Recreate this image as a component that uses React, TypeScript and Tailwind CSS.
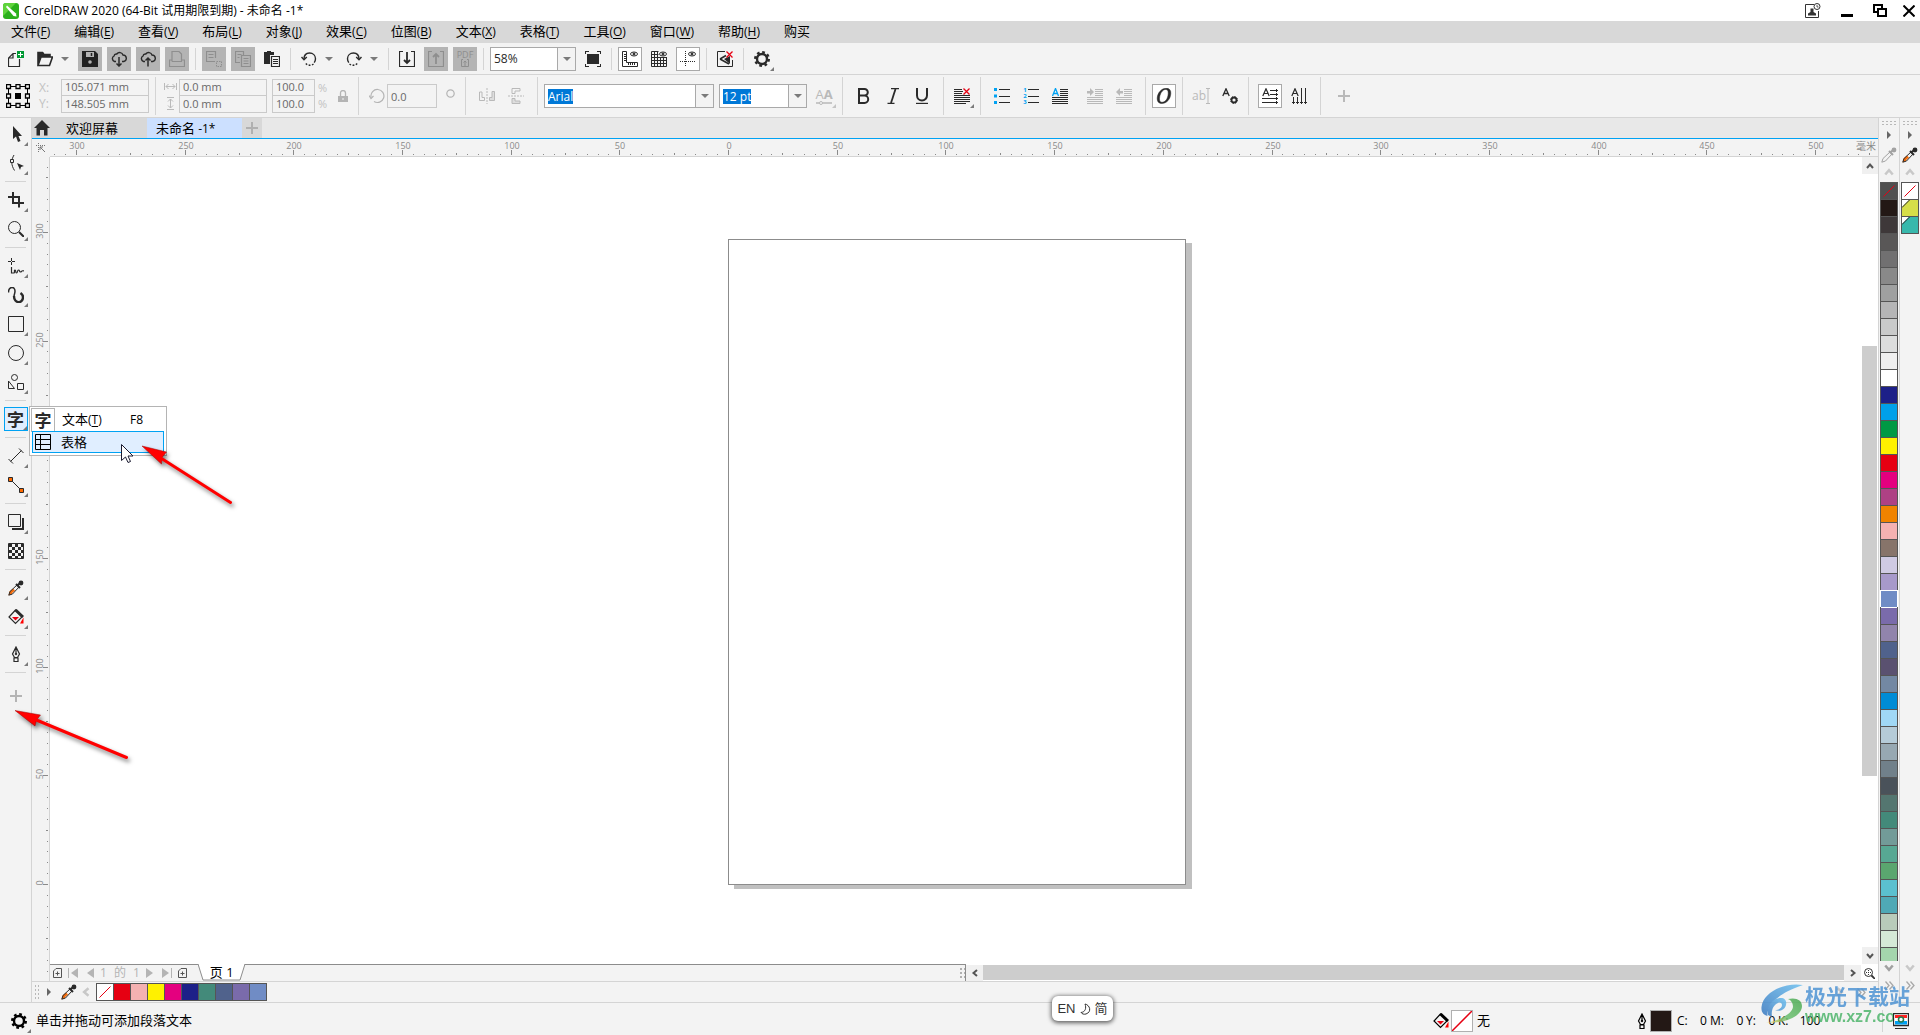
import { useState } from 'react';
import type { ReactNode } from 'react';
import clsx from 'clsx';

const menus = [
  { name: '文件', key: 'F' },
  { name: '编辑', key: 'E' },
  { name: '查看', key: 'V' },
  { name: '布局', key: 'L' },
  { name: '对象', key: 'J' },
  { name: '效果', key: 'C' },
  { name: '位图', key: 'B' },
  { name: '文本', key: 'X' },
  { name: '表格', key: 'T' },
  { name: '工具', key: 'O' },
  { name: '窗口', key: 'W' },
  { name: '帮助', key: 'H' },
  { name: '购买', key: '' },
];

const paletteColors = [
  '#231815', '#3e3839', '#595757', '#717071', '#898989', '#9fa0a0', '#b5b5b6', '#c9caca', '#dcdddd',
  '#efefef', '#ffffff', '#1d2088', '#00a0e9', '#009944', '#fff100', '#e60012', '#e4007f', '#ae4184',
  '#f08300', '#f4b1b1', '#87746a', '#cfcae3', '#a799ca', '#708cc5', '#7a6bab', '#9184ac', '#50628c',
  '#5a5170', '#7388a3', '#008cd6', '#a0d8f6', '#b5cbd8', '#97a8b2', '#71808a', '#4a525a', '#547670',
  '#438a7a', '#729b98', '#57a893', '#5aa66f', '#5bc0cf', '#4fa9b6', '#b8cbba', '#d5e9d7', '#a4d5ad',
];

const documentColors = [
  '#e60012', '#f4b1b1', '#fff100', '#e4007f', '#1d2088', '#438a7a', '#50628c', '#7a6bab', '#708cc5',
];

// screen pixels per millimetre at the current zoom
const MM = 2.174;
const ORIGIN_X = 678;
const ORIGIN_Y = 727;

interface IconProps {
  children: ReactNode;
  className?: string;
  box?: string;
}

function Icon({ children, className = 'size-4', box = '0 0 16 16' }: IconProps) {
  return (
    <svg viewBox={box} className={clsx('shrink-0', className)} fill="none" stroke="currentColor" aria-hidden="true">
      {children}
    </svg>
  );
}

interface ToolProps {
  label: string;
  children: ReactNode;
  look?: 'plain' | 'filled' | 'boxed';
  dim?: boolean;
  more?: boolean;
}

function Tool({ label, children, look = 'plain', dim, more }: ToolProps) {
  return (
    <button
      aria-label={label}
      className={clsx(
        'relative flex size-6 shrink-0 items-center justify-center',
        look === 'filled' && 'bg-[#b4b4b4]',
        look === 'boxed' && 'border border-[#a9a9a9] bg-white',
        dim && look === 'filled' && 'text-[#8e8e8e]',
        dim && look === 'plain' && 'text-[#b9b9b9]',
      )}
    >
      {children}
      {more && <Corner className={dim ? 'text-[#c4c4c4]' : 'text-[#7a7a7a]'} />}
    </button>
  );
}

function Corner({ className }: { className?: string }) {
  return (
    <svg viewBox="0 0 4 4" className={clsx('absolute right-0 bottom-0 size-1', className)} aria-hidden="true">
      <path d="M4 0v4H0z" fill="currentColor" />
    </svg>
  );
}

function Caret({ label }: { label: string }) {
  return (
    <button aria-label={label} className="flex h-6 w-4 items-center justify-center text-[#7a7a7a]">
      <Icon className="h-1 w-2" box="0 0 8 4">
        <path d="M0 0h8L4 4z" fill="currentColor" stroke="none" />
      </Icon>
    </button>
  );
}

function Divider({ tall }: { tall?: boolean }) {
  return <div className={clsx('mx-px w-px shrink-0 bg-[#d4d4d4]', tall ? 'h-[38px]' : 'h-[22px]')} />;
}

function Group({ children }: { children: ReactNode }) {
  return <div className="flex items-center gap-[5px] px-[3px]">{children}</div>;
}

interface ComboProps {
  label: string;
  value: string;
  width: string;
  selected?: boolean;
}

function Combo({ label, value, width, selected }: ComboProps) {
  return (
    <div className={clsx('flex h-6 shrink-0 border border-[#a9a9a9] bg-white', width)}>
      <div className="flex min-w-0 flex-1 items-center pl-[3px]">
        <input
          aria-label={label}
          defaultValue={value}
          className={clsx(
            'field-sizing-content h-[15px] text-[12px] leading-[15px] outline-none',
            selected && 'bg-[#0078d7] text-white',
          )}
        />
      </div>
      <div className="flex w-[18px] items-center justify-center border-l border-[#a9a9a9] bg-[#f3f3f3]">
        <Caret label={`${label} list`} />
      </div>
    </div>
  );
}

function GearIcon({ className = 'size-4' }: { className?: string }) {
  return (
    <Icon className={className}>
      <circle cx="8" cy="8" r="5" strokeWidth="2.4" />
      <circle cx="8" cy="8" r="6.8" strokeWidth="2.4" strokeDasharray="2.67 2.67" />
    </Icon>
  );
}

function DropperIcon({ faded }: { faded?: boolean }) {
  return (
    <Icon className={clsx('size-4', faded && 'opacity-40')}>
      <path d="M2 11.500 1 15l3.500-1" fill={faded ? 'none' : '#f26a0a'} stroke="none" />
      <path d="M1.500 11.500 5 8.500l2 2-4 3.500-2.500 1.500z" fill={faded ? 'none' : '#f26a0a'} stroke="none" />
      <path d="M9 5 2 11.500.8 15.200l3.700-1.200L11 7" />
      <path d="M8 4l4 4M10 5l3-3" strokeWidth="2" />
      <circle cx="13" cy="3" r="2.400" fill="currentColor" stroke="none" />
    </Icon>
  );
}

function BucketIcon() {
  return (
    <Icon>
      <path d="M7.500 1 1 8l6.500 6.500L14 8z" strokeWidth="1.200" />
      <path d="M7.500 1 15 8" strokeWidth="3" />
      <path d="M4 8h7l-3.500 3.500z" fill="#e60012" stroke="none" />
      <path d="M15.500 8.500v6h-3.500z" fill="#f00" stroke="none" />
    </Icon>
  );
}

function PenIcon() {
  return (
    <Icon>
      <path d="M8 1 4.500 8l2 3.500h3l2-3.500zM8 1v7M6 12h4v3.500H6z" strokeWidth="1.200" />
      <circle cx="8" cy="8" r="0.800" fill="currentColor" />
    </Icon>
  );
}

function PlusIcon({ className = 'size-3' }: { className?: string }) {
  return (
    <Icon className={className} box="0 0 12 12">
      <path d="M6 0v12M0 6h12" strokeWidth="2" />
    </Icon>
  );
}

function Chevron({ turn = '', className = 'size-2 text-[#555]' }: { turn?: string; className?: string }) {
  return (
    <Icon className={clsx(className, turn)} box="0 0 8 8">
      <path d="M1 6l3-3.500L7 6" strokeWidth="2" />
    </Icon>
  );
}

function DoubleChevron() {
  return (
    <Icon className="size-[9px] text-[#a8a8a8]" box="0 0 9 9">
      <path d="M.5.5l3.500 4-3.500 4M4.500.5l3.500 4-3.500 4" strokeWidth="1.300" />
    </Icon>
  );
}

function RightArrow() {
  return (
    <Icon className="h-2 w-1 text-[#666]" box="0 0 4 8">
      <path d="M0 0v8l4-4z" fill="currentColor" stroke="none" />
    </Icon>
  );
}

function CloudIcon({ up }: { up?: boolean }) {
  return (
    <Icon>
      <path d="M5 10.500H3.500a3 3 0 0 1-.5-5.500 2.500 2.500 0 0 1 2.800-2 3.500 3.500 0 0 1 6.200 1 3.300 3.300 0 0 1 .8 6.500H11" strokeWidth="1.400" />
      {up ? <path d="M8 15.500V7M5.500 9.500 8 7l2.500 2.500" strokeWidth="1.500" /> : <path d="M8 6v9M5.500 12.500 8 15l2.500-2.500" strokeWidth="1.500" />}
    </Icon>
  );
}

function UndoIcon({ flip }: { flip?: boolean }) {
  return (
    <Icon className={clsx('size-4', flip && '-scale-x-100')}>
      <path d="M3 8C3 4 5.500 2 8.500 2c3.500 0 6 2.500 6 5.800 0 1.500-.5 2.800-1.300 3.800" strokeWidth="1.400" />
      <path d="M.5 6 3 8.700 5.800 6" strokeWidth="1.400" />
      <path d="M12.500 13c-2.500 2-6.500 1.500-8.500-1.500" strokeDasharray="1.800 1.500" strokeWidth="1.400" />
    </Icon>
  );
}

function TableIcon() {
  return (
    <Icon>
      <path d="M.5.5h15v15H.5zM5.500.5v15M.5 5.500h15M.5 10.500h15" />
    </Icon>
  );
}

function TextIcon() {
  return <span className="font-['Noto_Sans_CJK_SC',sans-serif] text-[17px] leading-5 font-bold text-[#2a2a2a]">字</span>;
}

function TitleBar() {
  return (
    <header className="flex h-[21px] shrink-0 items-center bg-white pr-[5px] pl-[3px]">
      <Icon className="size-4">
        <rect width="16" height="16" rx="3" fill="#2bb01c" stroke="none" />
        <path d="M0 3a3 3 0 0 1 3-3h10L0 13z" fill="#5fd33c" stroke="none" />
        <path d="M3 4l1-1.500L13 10.500l.5 3-3-.5z" fill="#fff" stroke="none" />
      </Icon>
      <h1 className="ml-[5px] flex-1 text-[12px] leading-5">CorelDRAW 2020 (64-Bit 试用期限到期) - 未命名 -1*</h1>
      <button aria-label="Account" className="mr-5 text-[#333]">
        <Icon className="h-[15px] w-4" box="0 0 16 15">
          <path d="M9 1.500H.5v13h13V8" />
          <path d="M3 12.500h8v-2L8.500 9V5.500h-3V9L3 10.500z" fill="currentColor" stroke="none" />
          <circle cx="12" cy="3.500" r="3" fill="#fff" />
          <path d="M12 2v2h1.500" strokeWidth="0.800" />
        </Icon>
      </button>
      <button aria-label="Minimize" className="mr-5">
        <Icon className="h-[14px] w-3" box="0 0 12 14">
          <path d="M0 11.500h12" strokeWidth="3" />
        </Icon>
      </button>
      <button aria-label="Restore" className="mr-4">
        <Icon className="h-[13px] w-[14px]" box="0 0 14 13">
          <path d="M4 8H1V1h8v3M5 5h8v7H5z" strokeWidth="2" shapeRendering="crispEdges" />
        </Icon>
      </button>
      <button aria-label="Close">
        <Icon className="size-3" box="0 0 12 12">
          <path d="M.5.5l11 11M11.500.5l-11 11" strokeWidth="2" />
        </Icon>
      </button>
    </header>
  );
}

function MenuBar() {
  return (
    <nav className="flex h-[22px] shrink-0 items-start gap-6 bg-[#d8d8d8] pl-[11px]">
      {menus.map((menu) => (
        <button key={menu.name} className="text-[13px] leading-5">
          {menu.name}
          {menu.key && (
            <span className="text-[12px]">
              (<span className="underline underline-offset-2">{menu.key}</span>)
            </span>
          )}
        </button>
      ))}
    </nav>
  );
}

function StandardBar() {
  return (
    <div className="flex h-8 shrink-0 items-center gap-[5px] border-b border-[#d4d4d4] pl-1 text-[#2a2a2a]">
      <Tool label="New">
        <Icon>
          <path d="M8 2.500H5L.5 7v8.500h11V8M.5 7H5V2.500" strokeWidth="1.200" />
          <path d="M9 0h7v7H9z" fill="#009933" stroke="none" />
          <path d="M12.500 1v5M10 3.500h5" stroke="#fff" />
        </Icon>
      </Tool>
      <div className="flex">
        <Tool label="Open">
          <Icon>
            <path d="M1 14.500V1.500h4.500l1.500 2h6V6M1 14.500 4 6h11.500l-3 8.500z" strokeWidth="1.600" />
            <path d="M1 1h5l1 2.500h6V6H4l-3 7z" fill="currentColor" stroke="none" />
          </Icon>
        </Tool>
        <Caret label="Recent files" />
      </div>
      <Tool label="Save" look="filled">
        <Icon>
          <path d="M0 0h13l3 3v13H0z" fill="#222" stroke="none" />
          <path d="M4 1h8v5H4z" fill="#b4b4b4" stroke="none" />
          <path d="M9.500 2v3" stroke="#222" strokeWidth="1.500" />
          <circle cx="8" cy="11" r="1.800" fill="#b4b4b4" stroke="none" />
        </Icon>
      </Tool>
      <Tool label="Open from cloud" look="filled"><CloudIcon /></Tool>
      <Tool label="Save to cloud" look="filled"><CloudIcon up /></Tool>
      <Tool label="Print" look="filled" dim>
        <Icon>
          <path d="M3 10.500V.5h7l2.500 2.500v7.500M3 9H.5v6.500h15V9h-3M3 10.500h10" strokeWidth="1.200" />
        </Icon>
      </Tool>
      <Divider />
      <Tool label="Cut" look="filled" dim>
        <Icon>
          <path d="M9 10.500H.5V.5h9V7M2.500 3.500h5M2.500 6.500h5" strokeWidth="1.200" />
          <path d="M10.500 10.500h5v5h-5z" strokeDasharray="1.500 1" />
        </Icon>
      </Tool>
      <Tool label="Copy" look="filled" dim>
        <Icon>
          <path d="M5 11.500H.5V.5h8V4M2.500 3.500h4M2.500 6.500h2" strokeWidth="1.200" />
          <path d="M6.500 4.500h9v11h-9zM8.500 7.500h5M8.500 10h5M8.500 12.500h5" strokeWidth="1.200" />
        </Icon>
      </Tool>
      <Tool label="Paste">
        <Icon>
          <path d="M0 1h3V0h4v1h3v3H6v9H0z" fill="currentColor" stroke="none" />
          <path d="M7.500 5.500h8v10h-8zM9 8.500h5M9 10.500h5M9 12.500h5" strokeWidth="1.200" />
        </Icon>
      </Tool>
      <Divider />
      <div className="flex">
        <Tool label="Undo"><UndoIcon /></Tool>
        <Caret label="Undo history" />
      </div>
      <div className="flex">
        <Tool label="Redo"><UndoIcon flip /></Tool>
        <Caret label="Redo history" />
      </div>
      <Divider />
      <Tool label="Import">
        <Icon>
          <path d="M4 .5H.5v15h15V.5H12" strokeWidth="1.200" />
          <path d="M8 1v11M5 9l3 3 3-3" strokeWidth="1.800" />
        </Icon>
      </Tool>
      <Tool label="Export" look="filled" dim>
        <Icon>
          <path d="M4 .5H.5v15h15V.5H12" strokeWidth="1.200" />
          <path d="M8 13V3M5 6l3-3 3 3" strokeWidth="1.800" />
        </Icon>
      </Tool>
      <Tool label="Publish to PDF" look="filled" dim>
        <span className="flex flex-col items-center">
          <span className="text-[9px] leading-[9px]">PDF</span>
          <Icon className="size-2" box="0 0 8 8">
            <path d="M2 .5H.5v7h7v-7H6M4 7V2M2.500 3.500 4 2l1.500 1.500" />
          </Icon>
        </span>
      </Tool>
      <Divider />
      <Combo label="Zoom level" value="58%" width="w-[86px]" />
      <Tool label="Full-screen preview">
        <Icon>
          <path d="M2 3h12v10H2z" fill="currentColor" stroke="none" />
          <path d="M0 .5h4M12 .5h4M.5 0v3M15.500 0v3M.5 13v3M15.500 13v3M0 15.500h4M12 15.500h4" />
        </Icon>
      </Tool>
      <Divider />
      <Tool label="Show rulers" look="boxed">
        <Icon>
          <path d="M.5.5h4v11h11v4H.5z" />
          <path d="M2 3.500h2M2 5.500h2M2 7.500h2M2 9.500h2M6.500 12v2M8.500 12v2M10.500 12v2M12.500 12v2" />
          <ellipse cx="12" cy="3" rx="3.500" ry="2" />
          <circle cx="12" cy="3" r="1" fill="currentColor" />
        </Icon>
      </Tool>
      <Tool label="Show grid">
        <Icon>
          <path d="M.5.5h7M.5.5v15h15V6M.5 3.500h7M.5 6.500h15M.5 9.500h15M.5 12.500h15M3.500.5v15M6.500.5v15M9.500 6v9.500M12.500 6v9.500" />
          <ellipse cx="12" cy="3" rx="3.500" ry="2" />
          <circle cx="12" cy="3" r="1" fill="currentColor" />
        </Icon>
      </Tool>
      <Tool label="Show guidelines" look="boxed">
        <Icon>
          <path d="M5.500 0v16M0 10.500h16" strokeDasharray="1 1" />
          <ellipse cx="12" cy="3" rx="3.500" ry="2" />
          <circle cx="12" cy="3" r="1" fill="currentColor" />
        </Icon>
      </Tool>
      <Divider />
      <Tool label="Snap off">
        <Icon>
          <path d="M8 .5H.5v15h15V9" />
          <path d="M3 8l6-3.500M3 8l9 5" strokeWidth="1.500" />
          <path d="M7 8l6-3v8z" fill="currentColor" stroke="none" />
          <path d="M9.500.5l6 6M15.500.5l-6 6" stroke="#e60012" strokeWidth="1.300" />
        </Icon>
      </Tool>
      <Divider />
      <Tool label="Options" more><GearIcon /></Tool>
    </div>
  );
}

function PairFields({ names, values, width }: { names: string[]; values: string[]; width: string }) {
  return (
    <div className={clsx('flex flex-col border border-[#cacaca]', width)}>
      {values.map((value, index) => (
        <input
          key={names[index]}
          id={names[index]}
          aria-label={names[index]}
          defaultValue={value}
          className={clsx(
            'w-full bg-transparent pl-[3px] text-[11px] text-[#686868] outline-none',
            index === 0 ? 'h-4 border-b border-[#cacaca]' : 'h-4',
          )}
        />
      ))}
    </div>
  );
}

function PropertyBar() {
  return (
    <div className="flex h-[43px] shrink-0 items-center gap-[5px] border-b border-[#d4d4d4] pl-1.5 text-[#2a2a2a]">
      <button aria-label="Object origin" className="text-black">
        <Icon className="size-6" box="0 0 24 24">
          <path
            d="M.5.5h4v4h-4zM10 .5h4v4h-4zM19.500.5h4v4h-4zM.5 10h4v4h-4zM19.500 10h4v4h-4zM.5 19.500h4v4h-4zM10 19.500h4v4h-4zM19.500 19.500h4v4h-4z"
            strokeWidth="1.300"
          />
          <path d="M4.500 2.500H10M14 2.500h5.500M4.500 21.500H10M14 21.500h5.500M2.500 4.500V10M2.500 14v5.500M21.500 4.500V10M21.500 14v5.500" />
          <path d="M9 9h6v6H9z" fill="currentColor" stroke="none" />
        </Icon>
      </button>
      <div className="flex">
        <div className="flex w-[26px] flex-col pt-px pl-1 text-[12px] leading-4 text-[#c2c2c2]">
          <label htmlFor="X">X:</label>
          <label htmlFor="Y">Y:</label>
        </div>
        <PairFields names={['X', 'Y']} values={['105.071 mm', '148.505 mm']} width="w-[88px]" />
      </div>
      <Divider tall />
      <div className="flex">
        <div className="flex w-[17px] flex-col items-center justify-around text-[#bababa]">
          <Icon className="h-[7px] w-[13px]" box="0 0 13 7">
            <path d="M.5 0v7M12.500 0v7M2 3.500h9M4.500 1 2 3.500 4.500 6M8.500 1 11 3.500 8.500 6" />
          </Icon>
          <Icon className="h-[13px] w-[7px]" box="0 0 7 13">
            <path d="M0 .5h7M0 12.500h7M3.500 2v9M1 4.500 3.500 2 6 4.500M1 8.500 3.500 11 6 8.500" />
          </Icon>
        </div>
        <PairFields names={['Width', 'Height']} values={['0.0 mm', '0.0 mm']} width="w-[88px]" />
      </div>
      <div className="flex">
        <PairFields names={['Scale X', 'Scale Y']} values={['100.0', '100.0']} width="w-[43px]" />
        <div className="flex w-[14px] flex-col pt-px pl-[3px] text-[11px] leading-4 text-[#c2c2c2]">
          <span>%</span>
          <span>%</span>
        </div>
      </div>
      <button aria-label="Lock ratio" className="flex w-[18px] justify-center text-[#b4b4b4]">
        <Icon className="h-3 w-[10px]" box="0 0 10 12">
          <path d="M2.500 6V3a2.500 2.500 0 0 1 5 0v3" strokeWidth="1.300" />
          <path d="M0 6h10v6H0z" fill="currentColor" stroke="none" />
          <path d="M5 8v2" stroke="#f3f3f3" />
        </Icon>
      </button>
      <Divider tall />
      <div className="flex items-center">
        <label htmlFor="rotation" aria-label="Rotation" className="w-[22px] pl-1 text-[#b4b4b4]">
          <Icon>
            <path d="M2 9a6.500 6.500 0 1 1 3 4.500" strokeWidth="1.200" />
            <path d="M0 7.500l2 3 2.500-2.500" strokeWidth="1.200" />
          </Icon>
        </label>
        <input
          id="rotation"
          defaultValue="0.0"
          className="h-6 w-[50px] border border-[#cacaca] bg-transparent pl-[3px] text-[11px] text-[#686868] outline-none"
        />
      </div>
      <div className="flex w-[17px] justify-center pb-1.5 text-[#b4b4b4]">
        <Icon className="size-[9px]" box="0 0 9 9"><circle cx="4.500" cy="4.500" r="3.700" strokeWidth="1.200" /></Icon>
      </div>
      <Divider tall />
      <Group>
        <Tool label="Mirror horizontally" dim>
          <Icon>
            <path d="M.5 4v8.500h5V9.500H3V4z" />
            <path d="M8 0v16" strokeDasharray="2 1" />
            <path d="M13 3.500h2.500v9h-5v-3H13z" fill="#ddd" />
          </Icon>
        </Tool>
        <Tool label="Mirror vertically" dim>
          <Icon>
            <path d="M12 .5H4v5h3V3h5z" />
            <path d="M0 8h16" strokeDasharray="2 1" />
            <path d="M4 10.500h3V13h5v2.500H4z" fill="#ddd" />
          </Icon>
        </Tool>
      </Group>
      <Divider tall />
      <Combo label="Font" value="Arial" width="w-[170px]" selected />
      <Combo label="Font size" value="12 pt" width="w-[88px]" selected />
      <Tool label="Variable fonts" dim more>
        <span className="flex flex-col items-center">
          <span className="text-[13px] leading-[13px]">A<b>A</b></span>
          <Icon className="h-1 w-4" box="0 0 16 4">
            <path d="M0 2h16" strokeWidth="1.500" />
            <circle cx="5" cy="2" r="1.500" fill="#f3f3f3" />
          </Icon>
        </span>
      </Tool>
      <Divider tall />
      <Group>
        <Tool label="Bold">
          <Icon>
            <path d="M3 1v14M2 1h6.500a3.300 3.300 0 0 1 0 6.600H3M8.500 7.600a3.600 3.600 0 0 1 0 7.400H2" strokeWidth="2" />
          </Icon>
        </Tool>
        <Tool label="Italic">
          <Icon>
            <path d="M6 .6h8M2.500 15.400h7" strokeWidth="1.200" />
            <path d="M10.500 1 6 15" strokeWidth="1.800" />
          </Icon>
        </Tool>
        <Tool label="Underline">
          <Icon>
            <path d="M3 0v7.500a5 5 0 0 0 10 0V0" strokeWidth="2" />
            <path d="M2 15.400h12" strokeWidth="1.200" />
          </Icon>
        </Tool>
      </Group>
      <Divider tall />
      <Tool label="Text alignment" more>
        <Icon>
          <path d="M0 1.500h8M0 3.500h9M0 5.500h8M0 7.500h16M0 9.500h16M0 11.500h16M0 13.500h16M0 15.500h12" />
          <path d="M9.500.5l6 6M15.500.5l-6 6" stroke="#e60012" strokeWidth="1.300" />
        </Icon>
      </Tool>
      <Divider tall />
      <Group>
        <Tool label="Bulleted list">
          <Icon>
            <path d="M0 0h3v3H0zM0 6.500h3v3H0zM0 13h3v3H0z" fill="#00a2f3" stroke="none" />
            <path d="M5 1.500h11M5 8.500h11M5 14.500h11" />
          </Icon>
        </Tool>
        <Tool label="Numbered list">
          <span className="flex flex-col text-[6px] leading-[6px] font-bold text-[#00a2f3]">
            <span>1</span>
            <span>2</span>
            <span>3</span>
          </span>
          <Icon className="h-4 w-3" box="0 0 12 16"><path d="M1 1.500h11M1 8.500h11M1 14.500h11" /></Icon>
        </Tool>
        <Tool label="Drop cap">
          <Icon>
            <path d="M.5 8 3.500.5l3 7.500M1.500 5.500h4" stroke="#00a2f3" strokeWidth="1.300" />
            <path d="M8 1.500h8M8 3.500h8M8 5.500h8M8 7.500h8M0 9.500h16M0 11.500h16M0 13.500h16M0 15.500h16" />
          </Icon>
        </Tool>
      </Group>
      <Group>
        <Tool label="Increase indent" dim>
          <Icon>
            <path d="M0 3h3V0l4 4-4 4V5.500H0z" fill="currentColor" stroke="none" />
            <path d="M8 1.500h8M8 3.500h8M8 5.500h8M8 7.500h8M0 9.500h16M0 11.500h16M0 13.500h16M0 15.500h16" />
          </Icon>
        </Tool>
        <Tool label="Decrease indent" dim>
          <Icon>
            <path d="M7 3H4V0L0 4l4 4V5.500h3z" fill="currentColor" stroke="none" />
            <path d="M8 1.500h8M8 3.500h8M8 5.500h8M8 7.500h8M0 9.500h16M0 11.500h16M0 13.500h16M0 15.500h16" />
          </Icon>
        </Tool>
      </Group>
      <Divider tall />
      <Tool label="OpenType features" look="boxed">
        <Icon>
          <path
            d="M10 .3c3.500 0 5 2 4.800 5.200-.3 5.500-4 10-9 10C2.500 15.500 1 13.300 1.200 10 1.600 4.800 5.500.3 10 .3zM9.500 1.500C6.300 1.500 3.700 6 3.500 10.500c-.1 2.500.6 3.800 2.500 3.800 3.500 0 6-4 6.200-8.800.1-2.700-.5-4-2.700-4z"
            fill="currentColor"
            strokeWidth="0.500"
          />
        </Icon>
      </Tool>
      <Divider tall />
      <Tool label="Edit text" dim>
        <span className="text-[12px] leading-4">ab</span>
        <Icon className="h-4 w-1" box="0 0 4 16"><path d="M2 1v14M0 .5h4M0 15.500h4" /></Icon>
      </Tool>
      <Tool label="Text properties">
        <Icon>
          <path d="M.8 8 4 .8 7.200 8M2 5.500h4" strokeWidth="1.300" />
          <circle cx="12" cy="12" r="2.500" strokeWidth="1.800" />
          <circle cx="12" cy="12" r="3.500" strokeWidth="1" strokeDasharray="1.400 1.350" />
        </Icon>
      </Tool>
      <Divider tall />
      <Group>
        <Tool label="Horizontal text" look="boxed">
          <Icon>
            <path d="M.8 8 4 .8 7.200 8M2 5.500h4" strokeWidth="1.200" />
            <path d="M8 2.500h8M8 6.500h8M0 10.500h16M0 14.500h16M14.500 1v3M14.500 5v3M14.500 9v3M14.500 13v3" />
          </Icon>
        </Tool>
        <Tool label="Vertical text">
          <Icon>
            <path d="M.8 8 4 .8 7.200 8M2 5.500h4" strokeWidth="1.200" />
            <path d="M10.500 0v16M14.500 0v16M2.500 9v7M6.500 9v7M1 14.500h3M5 14.500h3M9 14.500h3M13 14.500h3" />
          </Icon>
        </Tool>
      </Group>
      <Divider tall />
      <div className="pl-[5px]">
        <Tool label="Quick customize" dim><PlusIcon /></Tool>
      </div>
    </div>
  );
}

interface ToolboxButtonProps {
  label: string;
  children: ReactNode;
  active?: boolean;
  more?: boolean;
}

function ToolboxButton({ label, children, active, more = true }: ToolboxButtonProps) {
  return (
    <button aria-label={label} className="flex h-[29px] items-center justify-center">
      <span
        className={clsx(
          'relative flex size-6 items-center justify-center',
          active && 'border border-[#00a2f3] bg-[#e0eeff]',
        )}
      >
        {children}
        {more && <Corner className="text-[#7a7a7a]" />}
      </span>
    </button>
  );
}

function ToolboxRule() {
  return <div className="mx-[5px] mt-1 mb-[3px] h-px bg-[#d4d4d4]" />;
}

function Toolbox() {
  return (
    <aside className="flex w-8 shrink-0 flex-col border-r border-[#d4d4d4] pt-px text-[#2a2a2a]">
      <ToolboxButton label="Pick">
        <Icon><path d="M5 0v13l3-2.500 2 5.500 2.500-1-2-5H14z" fill="currentColor" stroke="none" /></Icon>
      </ToolboxButton>
      <ToolboxButton label="Shape">
        <Icon>
          <path d="M6 0C3 5 3 10 6.500 15.500" />
          <path d="M2.500 4.500h3v3h-3z" fill="#f3f3f3" />
          <path d="M9 8l7 3-3 1-1 3z" fill="currentColor" stroke="none" />
        </Icon>
      </ToolboxButton>
      <ToolboxRule />
      <ToolboxButton label="Crop">
        <Icon><path d="M0 5h11v10.500M5 0v11h11" strokeWidth="2" /></Icon>
      </ToolboxButton>
      <ToolboxButton label="Zoom">
        <Icon>
          <circle cx="6.500" cy="6.500" r="6" />
          <path d="M11 11l5 5" strokeWidth="2" />
        </Icon>
      </ToolboxButton>
      <ToolboxRule />
      <ToolboxButton label="Freehand">
        <Icon>
          <path d="M3.500 0v7M0 3.500h7" strokeDasharray="3 1" />
          <path d="M3.500 9v6h2c2 0 0-3 1.500-3s0 3 1.500 3 .5-3 2-3 .5 2 2 2 .5-2 3.500-1" strokeWidth="1.200" />
        </Icon>
      </ToolboxButton>
      <ToolboxButton label="Artistic media">
        <Icon>
          <path d="M.5 5.500C.5-1 7-1 7 4c0 3-1 3-1 6" strokeWidth="1.500" />
          <path d="M6 9c0 8 9 8 9 1 0-2-1-3-2.500-4" strokeWidth="2.400" />
        </Icon>
      </ToolboxButton>
      <ToolboxButton label="Rectangle">
        <Icon><path d="M.5.5h15v15H.5z" /></Icon>
      </ToolboxButton>
      <ToolboxButton label="Ellipse">
        <Icon><circle cx="8" cy="8" r="7.500" /></Icon>
      </ToolboxButton>
      <ToolboxButton label="Polygon">
        <Icon>
          <circle cx="6.500" cy="3.500" r="3" />
          <path d="M.5 7v7.500h6zM9.500 9.500h6v6h-6z" />
        </Icon>
      </ToolboxButton>
      <ToolboxRule />
      <ToolboxButton label="Text" active><TextIcon /></ToolboxButton>
      <ToolboxRule />
      <ToolboxButton label="Dimension">
        <Icon><path d="M2.500 13.500l11-11M.5 11l4.500 4.500M11 .5l4.500 4.500" /></Icon>
      </ToolboxButton>
      <ToolboxButton label="Connector">
        <Icon>
          <path d="M3 3l10 10" />
          <path d="M.5.5h4v4h-4zM11.500 11.500h4v4h-4z" fill="#ff6a00" />
        </Icon>
      </ToolboxButton>
      <ToolboxRule />
      <ToolboxButton label="Drop shadow">
        <Icon>
          <path d="M.5.5h12v12H.5z" />
          <path d="M15 4v11H4" strokeWidth="2" />
        </Icon>
      </ToolboxButton>
      <ToolboxButton label="Transparency" more={false}>
        <Icon>
          <path d="M.5.5h15v15H.5z" />
          <path
            d="M1 1h3v3H1zM7 1h3v3H7zM13 1h2v3h-2zM4 4h3v3H4zM10 4h3v3h-3zM1 7h3v3H1zM7 7h3v3H7zM13 7h2v3h-2zM4 10h3v3H4zM10 10h3v3h-3zM1 13h3v2H1zM7 13h3v2H7zM13 13h2v2h-2z"
            fill="currentColor"
            stroke="none"
          />
        </Icon>
      </ToolboxButton>
      <ToolboxRule />
      <ToolboxButton label="Color eyedropper"><DropperIcon /></ToolboxButton>
      <ToolboxButton label="Interactive fill"><BucketIcon /></ToolboxButton>
      <ToolboxRule />
      <ToolboxButton label="Outline pen"><PenIcon /></ToolboxButton>
      <ToolboxRule />
      <button aria-label="Customize toolbox" className="flex h-10 items-center justify-center text-[#b4b4b4]">
        <PlusIcon />
      </button>
    </aside>
  );
}

function TextFlyout() {
  return (
    <div className="absolute top-[406px] left-[29px] flex w-[138px] flex-col border border-[#b4b4b4] bg-white p-px text-[13px] leading-5">
      <button className="flex h-[23px] items-center">
        <span className="flex size-6 items-center justify-center border border-[#b4b4b4]"><TextIcon /></span>
        <span className="ml-[7px] w-[68px] text-left">
          文本<span className="text-[12px]">(<span className="underline underline-offset-2">T</span>)</span>
        </span>
        <span className="text-[12px]">F8</span>
      </button>
      <button className="relative mx-px mb-px flex h-[22px] items-center border border-[#00a2f3] bg-[#e0eeff] pl-0.5">
        <TableIcon />
        <span className="ml-2.5">表格</span>
      </button>
    </div>
  );
}

function DocumentTabs() {
  return (
    <div className="flex h-[21px] shrink-0 border-b border-[#00a2f3] bg-[#e8e8e8]">
      <button aria-label="Home" className="flex w-[19px] items-center justify-center bg-[#d8d8d8] text-[#2a2a2a]">
        <Icon><path d="M8 0l8 8h-2.500v7.500H10V10H6v5.500H2.500V8H0z" fill="currentColor" stroke="none" /></Icon>
      </button>
      <button className="w-24 bg-[#d8d8d8] pl-[15px] text-left text-[13px] leading-5">欢迎屏幕</button>
      <button className="w-[95px] bg-[#cce0ff] pl-[9px] text-left text-[13px] leading-5">
        未命名<span className="text-[12px]"> -1*</span>
      </button>
      <button aria-label="New document" className="flex w-5 items-center justify-center bg-[#d8d8d8] text-[#b0b0b0]">
        <PlusIcon />
      </button>
    </div>
  );
}

// ticks are every 5 mm, a number every 50 mm
const topTicks = Array.from({ length: 169 }, (_, i) => (i - 62) * 5);
const sideTicks = Array.from({ length: 76 }, (_, i) => (i - 9) * 5);

function TopRuler() {
  return (
    <svg className="h-full min-w-0 flex-1" shapeRendering="crispEdges" role="img" aria-label="Horizontal ruler">
      {topTicks.map((mm) => {
        const x = Math.round(ORIGIN_X + mm * MM);
        const size = mm % 50 === 0 ? 5 : mm % 25 === 0 ? 2 : 1;
        return (
          <g key={mm}>
            <rect x={x} y={16 - size} width="1" height={size} fill="#8a8a8a" />
            {mm % 50 === 0 && mm <= 500 && (
              <text x={x + 1} y="10" textAnchor="middle" fontSize="9" fill="#8a8a8a">{Math.abs(mm)}</text>
            )}
          </g>
        );
      })}
    </svg>
  );
}

function SideRuler() {
  return (
    <svg className="h-full w-[18px] shrink-0 border-r border-[#d4d4d4]" shapeRendering="crispEdges" role="img" aria-label="Vertical ruler">
      {sideTicks.map((mm) => {
        const y = Math.round(ORIGIN_Y - mm * MM);
        const size = mm % 50 === 0 ? 5 : mm % 25 === 0 ? 2 : 1;
        return (
          <g key={mm}>
            <rect x={16 - size} y={y} width={size} height="1" fill="#8a8a8a" />
            {mm % 50 === 0 && (
              <text transform={`translate(11 ${y - 1}) rotate(-90)`} textAnchor="middle" fontSize="9" fill="#8a8a8a">
                {mm}
              </text>
            )}
          </g>
        );
      })}
    </svg>
  );
}

function Page() {
  return (
    <div className="flex min-w-0 flex-1 items-center justify-center overflow-hidden bg-white pt-0.5 pl-0.5">
      <div className="h-[646px] w-[458px] shrink-0 border border-[#8c8c8c] bg-white shadow-[6px_4px_0_#c0c0c0]" />
    </div>
  );
}

function VerticalScroll() {
  return (
    <div className="flex w-4 shrink-0 flex-col bg-white">
      <button aria-label="Scroll up" className="flex h-[17px] items-center justify-center bg-[#f0f0f0]"><Chevron /></button>
      <div className="grow-[172]" />
      <div className="mr-px grow-[430] bg-[#cdcdcd]" />
      <div className="grow-[171]" />
      <button aria-label="Scroll down" className="flex h-[17px] items-center justify-center bg-[#f0f0f0]">
        <Chevron turn="rotate-180" />
      </button>
    </div>
  );
}

function AddPageIcon() {
  return (
    <Icon className="h-[10px] w-[9px] text-[#555]" box="0 0 9 10">
      <path d="M3 .5h5.500v9h-8V3zM4.500 3.500v4M2.500 5.500h4" />
    </Icon>
  );
}

function PageArrow({ back, bar }: { back?: boolean; bar?: boolean }) {
  return (
    <Icon className={clsx('size-[10px] text-[#b4b4b4]', back && 'rotate-180')} box="0 0 10 10">
      <path d="M0 0v10l7-5z" fill="currentColor" stroke="none" />
      {bar && <path d="M9.500 0v10" />}
    </Icon>
  );
}

function PageBar() {
  return (
    <div className="flex h-[17px] shrink-0">
      <div className="flex min-w-0 flex-1 items-center border-t border-r border-[#8c8c8c] pl-[3px] text-[#b4b4b4]">
        <button aria-label="Add page before"><AddPageIcon /></button>
        <button aria-label="First page" className="ml-1.5"><PageArrow back bar /></button>
        <button aria-label="Previous page" className="ml-1.5"><PageArrow back /></button>
        <span className="ml-1.5 flex gap-[7px] text-[12px] leading-4">
          <span>1</span>
          <span>的</span>
          <span>1</span>
        </span>
        <button aria-label="Next page" className="ml-1.5"><PageArrow /></button>
        <button aria-label="Last page" className="ml-1.5"><PageArrow bar /></button>
        <button aria-label="Add page after" className="ml-1.5"><AddPageIcon /></button>
        <button className="relative ml-[11px] -mt-px h-[17px] w-12 text-[13px] leading-[15px] text-black">
          <svg viewBox="0 0 48 17" className="absolute inset-0" aria-hidden="true">
            <path d="M0 0l5 16h37l5-16" fill="#fff" stroke="#8c8c8c" />
            <path d="M1 .5h45" stroke="#fff" />
          </svg>
          <span className="relative">页 1</span>
        </button>
        <div className="ml-auto h-3 w-1.5 bg-[radial-gradient(circle,#b0b0b0_1px,transparent_1px)] bg-[size:4px_4px]" />
      </div>
      <div className="flex min-w-0 flex-1 bg-white pt-px">
        <button aria-label="Scroll left" className="flex w-[17px] items-center justify-center bg-[#f0f0f0]">
          <Chevron turn="-rotate-90" />
        </button>
        <div className="mb-px flex-1 bg-[#cdcdcd]" />
        <button aria-label="Scroll right" className="flex w-[17px] items-center justify-center bg-[#f0f0f0]">
          <Chevron turn="rotate-90" />
        </button>
        <button aria-label="Navigator" className="flex w-[17px] items-center justify-center text-[#333]">
          <Icon className="size-[11px]" box="0 0 11 11">
            <circle cx="4.500" cy="4.500" r="4" />
            <path d="M4.500 2v5M2 4.500h5" strokeDasharray="1 1" />
            <path d="M7.500 7.500 11 11" strokeWidth="1.800" />
          </Icon>
        </button>
      </div>
    </div>
  );
}

function NoFill() {
  return (
    <svg viewBox="0 0 16 16" className="size-4" aria-hidden="true">
      <path d="M2.500 13.500l11-11" stroke="#e60012" />
    </svg>
  );
}

function DocumentPalette() {
  return (
    <div className="flex h-[21px] shrink-0 items-center border-t border-[#d4d4d4] pl-0.5">
      <div className="h-4 w-1.5 bg-[radial-gradient(circle,#b8b8b8_1px,transparent_1px)] bg-[size:3px_4px]" />
      <button aria-label="Palette menu" className="ml-[7px]"><RightArrow /></button>
      <button aria-label="Pick document color" className="ml-2.5 text-[#2a2a2a]"><DropperIcon /></button>
      <button aria-label="Scroll palette left" className="mx-1"><Chevron turn="-rotate-90" className="size-2.5 text-[#c8c8c8]" /></button>
      <div className="ml-px flex gap-px border border-[#555] bg-[#555]">
        <button aria-label="No fill" className="size-4 bg-white"><NoFill /></button>
        {documentColors.map((color) => (
          <button key={color} aria-label={color} className="size-4" style={{ backgroundColor: color }} />
        ))}
      </div>
      <button aria-label="Scroll palette right" className="mr-3 ml-auto"><Chevron turn="rotate-90" className="size-2.5 text-[#c8c8c8]" /></button>
      <button aria-label="Expand palette" className="mr-3"><DoubleChevron /></button>
    </div>
  );
}

function PaletteDock({ faded, children }: { faded?: boolean; children: ReactNode }) {
  return (
    <aside className="flex w-[21px] shrink-0 flex-col items-center border-l border-[#d4d4d4] pt-0.5">
      <div className="h-1.5 w-4 shrink-0 bg-[radial-gradient(circle,#b8b8b8_1px,transparent_1px)] bg-[size:4px_3px]" />
      <button aria-label="Palette menu" className="mt-[5px]"><RightArrow /></button>
      <button aria-label="Pick color" className="mt-2 text-[#2a2a2a]"><DropperIcon faded={faded} /></button>
      <button aria-label="Scroll palette up" className="mt-1"><Chevron className="size-2.5 text-[#c8c8c8]" /></button>
      <div className="mt-[5px] min-h-0 flex-1 overflow-hidden">{children}</div>
      <button aria-label="Scroll palette down" className="mt-0.5"><Chevron turn="rotate-180" className={clsx('size-2.5', faded ? 'text-[#a0a0a0]' : 'text-[#c8c8c8]')} /></button>
      <button aria-label="Expand palette" className="mt-2 mb-3"><DoubleChevron /></button>
    </aside>
  );
}

function ColorPalette() {
  const [current, setCurrent] = useState('#708cc5');

  return (
    <div className="flex flex-col border-x border-t border-[#555]">
      <button aria-label="No fill" className="size-4 bg-[#4f4f4f]"><NoFill /></button>
      {paletteColors.map((color) => (
        <button
          key={color}
          aria-label={color}
          onClick={() => setCurrent(color)}
          className={clsx(
            'h-[17px] w-4 border-t',
            color === current
              ? 'relative z-10 border-white shadow-[-1px_0_#fff,1px_0_#fff,0_1px_#fff]'
              : 'border-[#555]',
          )}
          style={{ backgroundColor: color }}
        />
      ))}
    </div>
  );
}

function StyleSwatches() {
  return (
    <div className="flex flex-col gap-px border border-[#555] bg-[#555]">
      <button aria-label="No fill" className="size-4 bg-white"><NoFill /></button>
      {['#d6de49', '#38b8ac'].map((color) => (
        <button key={color} aria-label={color} className="size-4" style={{ backgroundColor: color }}>
          <svg viewBox="0 0 16 16" className="size-4" aria-hidden="true">
            <path d="M0 0h7L0 7z" fill="#fff" />
            <path d="M7.500 0 0 7.500" stroke="#222" />
          </svg>
        </button>
      ))}
    </div>
  );
}

function StatusBar() {
  return (
    <footer className="flex h-[33px] shrink-0 items-center border-t border-[#d4d4d4] pt-1 pl-[7px] text-[13px]">
      <Tool label="Status options" more><GearIcon /></Tool>
      <p className="ml-[5px] flex-1">单击并拖动可添加段落文本</p>
      <div className="flex w-[201px] items-center">
        <BucketIcon />
        <span className="mr-1 ml-0.5 flex size-[22px] shrink-0 border border-[#b0b0b0] bg-white">
          <svg viewBox="0 0 20 20" className="size-5" aria-hidden="true"><path d="M0 20 20 0" stroke="#e60012" strokeWidth="1.500" /></svg>
        </span>
        <span>无</span>
      </div>
      <div className="flex w-[248px] items-center">
        <PenIcon />
        <span className="mr-[5px] size-[22px] shrink-0 border border-[#b0b0b0] bg-[#231815]" />
        <dl className="grid grid-cols-[20px_13px_24px_12px_20px_12px_20px_24px] text-[12px] leading-5">
          <dt>C:</dt>
          <dd className="text-center">0</dd>
          <dt>M:</dt>
          <dd className="text-center">0</dd>
          <dt>Y:</dt>
          <dd className="text-center">0</dd>
          <dt>K:</dt>
          <dd className="text-center">100</dd>
        </dl>
      </div>
      <div className="flex h-[22px] w-[38px] items-center border-l border-[#d4d4d4] pl-2.5">
        <button aria-label="Proof colors" className="relative z-20 bg-[#f3f3f3] text-[#2a2a2a]">
          <Icon>
            <path d="M.5.5h15v12H.5z" fill="#fff" strokeWidth="1.300" />
            <path d="M2 2h12v3H2z" fill="#f22" stroke="none" />
            <path d="M2 8h12v3.500H2z" fill="#00a2f3" stroke="none" />
            <circle cx="8" cy="6.500" r="2.500" fill="#fff" stroke="#2b7a4b" strokeWidth="1.500" />
            <path d="M2 15.500h12" />
          </Icon>
        </button>
      </div>
    </footer>
  );
}

function InputMethod() {
  return (
    <div className="absolute bottom-[14px] left-[1052px] flex h-[25px] w-[61px] items-center justify-center gap-1 rounded-md bg-white font-['Liberation_Sans','Noto_Sans_CJK_SC',sans-serif] text-[13px] text-[#333] shadow-[0_1px_4px_1px_rgba(0,0,0,0.6)]">
      <span>EN</span>
      <Icon className="h-3 w-[11px]" box="0 0 11 12">
        <path d="M5 1c5 1 7 8 1 10-2 .6-4 0-5-1.500C5.500 9 6.500 5 5 1z" />
      </Icon>
      <span>简</span>
    </div>
  );
}

function Watermark() {
  return (
    <div className="pointer-events-none absolute right-[10px] bottom-2 z-10 flex w-[149px] items-start gap-0.5 opacity-85">
      <svg viewBox="0 0 42 40" className="h-10 w-[42px] shrink-0" aria-hidden="true">
        <defs>
          <linearGradient id="swirl-blue" x1="0" y1="1" x2="1" y2="0">
            <stop offset="0" stopColor="#3878c0" />
            <stop offset="1" stopColor="#6cc0f0" />
          </linearGradient>
          <linearGradient id="swirl-green" x1="0" y1="1" x2="1" y2="0">
            <stop offset="0" stopColor="#f0d060" />
            <stop offset="0.400" stopColor="#6cc070" />
            <stop offset="1" stopColor="#48a850" />
          </linearGradient>
        </defs>
        <path d="M42 1C24-2 2 8 .5 23c-.5 5 2 8 6 9-1-7 5-21 35.500-31z" fill="url(#swirl-blue)" />
        <path d="M7 31c-2-9 5-17 13-17 4 0 6 3 5 7-1 5-7 7-11 5 4 0 7-2 7-5 0-2-2-3-4-2-5 2-7 8-6 14z" fill="url(#swirl-blue)" />
        <path d="M27 15c8-2 14 1 14 7 0 9-13 17-36 17 14-3 26-9 27-16 0-4-2-7-5-8z" fill="url(#swirl-green)" />
      </svg>
      <div className="w-[105px] font-['Noto_Sans_CJK_SC',sans-serif] font-bold">
        <div className="text-[21px] leading-[22px] whitespace-nowrap text-[#4f94d4]">极光下载站</div>
        <div className="pt-px font-['Liberation_Sans',sans-serif] text-[16px] leading-5 whitespace-nowrap text-[#4fb56c]">www.xz7.com</div>
      </div>
    </div>
  );
}

function Pointers() {
  return (
    <svg className="pointer-events-none absolute inset-0 z-30 size-full" aria-hidden="true">
      <g className="drop-shadow-[2px_3px_2px_rgba(0,0,0,0.5)]" fill="#f00" stroke="#f00">
        <path d="M142 446l24.500 6-4.500 5.500-.5 6.500z" stroke="#a00000" strokeWidth="0.500" />
        <path d="M160 457.500l70.500 45" strokeWidth="3" strokeLinecap="round" />
        <path d="M15 710.500l25.500 4.500-4 5-1.500 6z" stroke="#a00000" strokeWidth="0.500" />
        <path d="M34 719l92.500 38.500" strokeWidth="3" strokeLinecap="round" />
      </g>
      <path d="M121.500 444.500v16l4-3.500 2.500 5.500 2.500-1-2.500-5.500h5z" fill="#fff" stroke="#1a1a30" />
    </svg>
  );
}

export default function App() {
  return (
    <div className="relative flex h-screen min-w-0 flex-col overflow-hidden bg-[#f3f3f3] font-['Open_Sans','Noto_Sans_CJK_SC',sans-serif] text-black">
      <TitleBar />
      <MenuBar />
      <StandardBar />
      <PropertyBar />
      <div className="flex min-h-0 flex-1">
        <Toolbox />
        <main className="flex min-w-0 flex-1 flex-col">
          <DocumentTabs />
          <div className="flex h-[18px] shrink-0">
            <div className="flex w-[18px] items-center justify-center text-[#777]">
              <Icon className="size-[10px]" box="0 0 10 10">
                <path d="M0 2.500h10M2.500 0v10" strokeDasharray="1 1" />
                <path d="M4 4l5 5M4 7V4h3" />
              </Icon>
            </div>
            <div className="flex min-w-0 flex-1 border-b border-[#d4d4d4]">
              <TopRuler />
              <span className="absolute right-[44px] text-[10px] leading-[14px] text-[#8a8a8a]">毫米</span>
            </div>
          </div>
          <div className="flex min-h-0 flex-1">
            <SideRuler />
            <div className="flex min-w-0 flex-1 flex-col">
              <div className="flex min-h-0 flex-1">
                <Page />
                <VerticalScroll />
              </div>
              <PageBar />
            </div>
          </div>
          <DocumentPalette />
        </main>
        <PaletteDock faded><ColorPalette /></PaletteDock>
        <PaletteDock><StyleSwatches /></PaletteDock>
      </div>
      <StatusBar />
      <TextFlyout />
      <InputMethod />
      <Watermark />
      <Pointers />
    </div>
  );
}
